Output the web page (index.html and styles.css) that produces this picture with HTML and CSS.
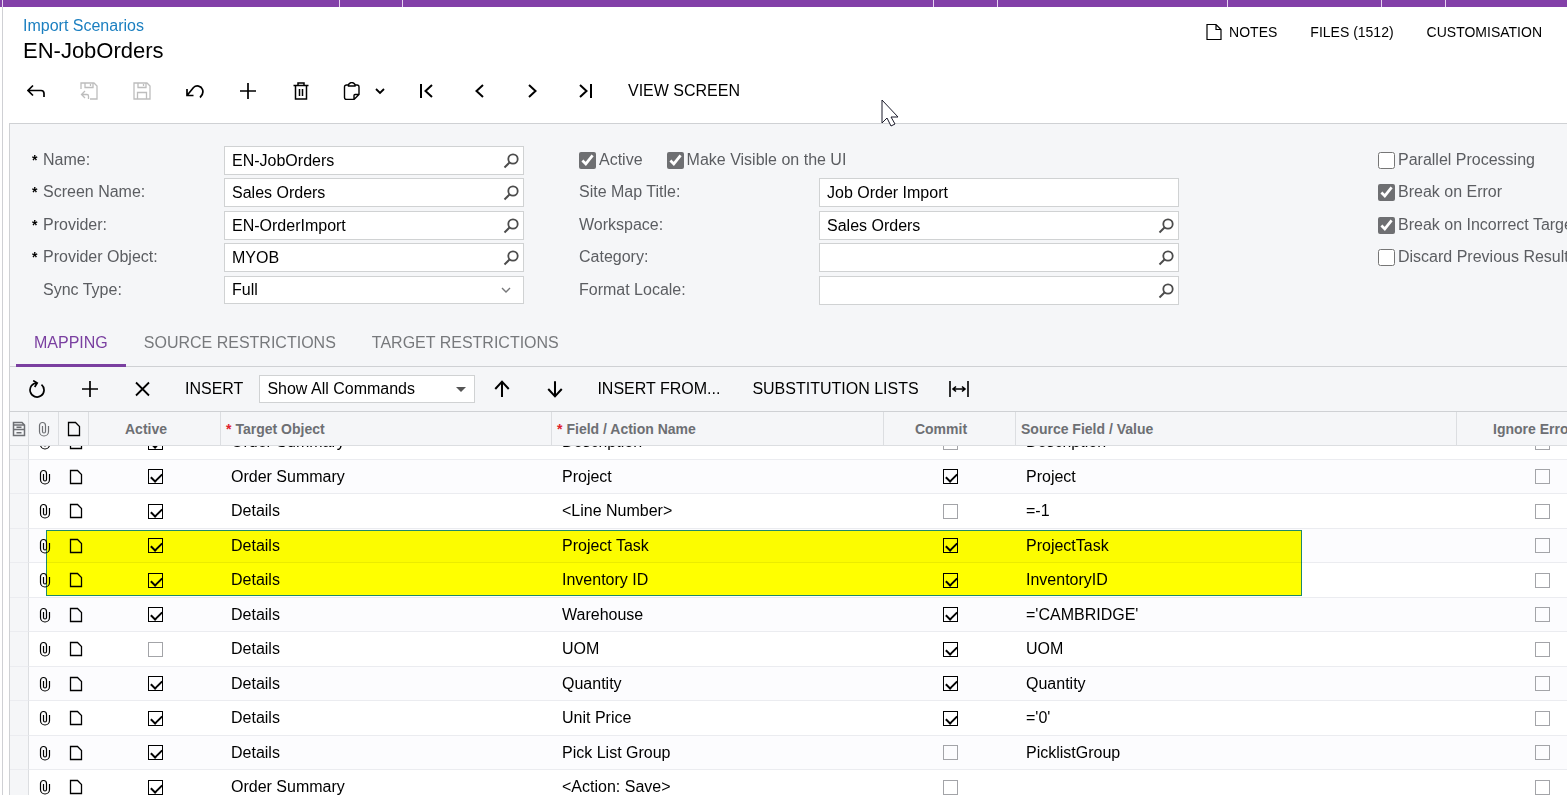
FILE: index.html
```html
<!DOCTYPE html>
<html lang="en">
<head>
    <meta charset="UTF-8">
    <meta name="viewport" content="width=device-width, initial-scale=1.0">
    <title>EN-JobOrders</title>
    <link rel="stylesheet" href="styles.css">
</head>
<body>
    <svg class="sprite" aria-hidden="true">
        <symbol id="i-plus" viewBox="0 0 18 18"><path d="M9 1v16M1 9h16" stroke-width="1.700"/></symbol>
        <symbol id="i-search" viewBox="0 0 16 16"><circle cx="10" cy="6" r="4.700" stroke-width="1.800"/><path d="M6.500 9.500L1.500 14.500" stroke-width="2"/></symbol>
        <symbol id="i-clip" viewBox="0 0 12 16"><path d="M10.500 5v5.500a4.500 4.500 0 0 1-9 0V4.500a3 3 0 0 1 6 0v6a1.500 1.500 0 0 1-3 0V5" stroke-width="1.200"/></symbol>
        <symbol id="i-doc" viewBox="0 0 14 16"><path d="M1.500 1.500h7l4 4v9h-11z" stroke-width="1.300"/></symbol>
        <symbol id="i-up" viewBox="0 0 16 16"><path d="M8 15V2M2 8l6-6.500L14 8" stroke-width="1.800"/></symbol>
    </svg>

    <div class="top-bar">
        <span></span><span></span><span></span><span></span><span></span><span></span><span></span><span></span><span></span>
    </div>

    <div class="page">
        <div class="page-header">
            <div class="titles">
                <a class="breadcrumb" href="#">Import Scenarios</a>
                <h1>EN-JobOrders</h1>
            </div>
            <div class="header-links">
                <button type="button"><svg class="icon note-icon" viewBox="0 0 16 18"><path d="M1 1.500h9l5 5v10H1zM10 1.500v5h5" stroke-width="1.200"/></svg>NOTES</button>
                <button type="button">FILES (1512)</button>
                <button type="button">CUSTOMISATION</button>
            </div>
        </div>

        <div class="toolbar">
            <button class="tool" type="button" aria-label="Back"><svg class="icon" viewBox="0 0 18 18"><path d="M6 3.500L1 8.500L6 13.500M1 8.500h13a3 3 0 0 1 3 3V15" stroke-width="1.700"/></svg></button>
            <button class="tool" type="button" aria-label="Save and close" disabled><svg class="icon" viewBox="0 0 18 18"><path d="M1 7V1h13l3 3v13h-7M5 1v4.500h8V1M10.500 2v2M5 9L1.500 12.500L5 16M1.500 12.500H7q1.500 0 1.500 1.500v3" stroke-width="1.300"/></svg></button>
            <button class="tool" type="button" aria-label="Save" disabled><svg class="icon" viewBox="0 0 18 18"><path d="M1 1h13l3 3v13H1zM5 1v4.500h8V1M10.500 2v2M4.500 17v-6.500h9V17" stroke-width="1.300"/></svg></button>
            <button class="tool" type="button" aria-label="Undo"><svg class="icon" viewBox="0 0 18 18"><path d="M1 7v6.500h6.500M1 13.500L7.500 5.500a5.500 5.500 0 0 1 9 2q1.500 4.500-2.500 8" stroke-width="1.700"/></svg></button>
            <button class="tool" type="button" aria-label="Add"><svg class="icon"><use href="#i-plus"/></svg></button>
            <button class="tool" type="button" aria-label="Delete"><svg class="icon" viewBox="0 0 18 18"><path d="M1.500 3.500h15M3.500 3.500V17h11V3.500M6 3V1h6v2M7.500 7v7M10.500 7v7" stroke-width="1.500"/></svg></button>
            <button class="tool tool-menu" type="button" aria-label="Clipboard">
                <svg class="icon" viewBox="0 0 18 18"><path d="M5.500 3H3.500a2 2 0 0 0-2 2v10.500a2 2 0 0 0 2 2H11l5-5V5a2 2 0 0 0-2-2h-2M5.500 4V2.500Q7 .5 8.800.5T12 2.500V4zM11 17v-3.500q0-1 1-1h4" stroke-width="1.400"/></svg>
                <svg class="caret" viewBox="0 0 10 8"><path d="M1 2l4 4l4-4" stroke-width="1.800"/></svg>
            </button>
            <button class="tool" type="button" aria-label="First record"><svg class="icon" viewBox="0 0 18 18"><path d="M3 2v14M14 3L7.500 9l6.500 6" stroke-width="2"/></svg></button>
            <button class="tool" type="button" aria-label="Previous record"><svg class="icon" viewBox="0 0 18 18"><path d="M12 3L5.500 9l6.500 6" stroke-width="2"/></svg></button>
            <button class="tool" type="button" aria-label="Next record"><svg class="icon" viewBox="0 0 18 18"><path d="M5 3l6.500 6L5 15" stroke-width="2"/></svg></button>
            <button class="tool" type="button" aria-label="Last record"><svg class="icon" viewBox="0 0 18 18"><path d="M3 3l6.500 6L3 15M14 2v14" stroke-width="2"/></svg></button>
            <button class="text-tool" type="button">VIEW SCREEN</button>
        </div>

        <div class="panel">
            <form class="summary">
                <div class="form-col form-col-main">
                    <label class="required" for="name">Name:</label>
                    <div class="field"><input id="name" type="text" value="EN-JobOrders"><button type="button" aria-label="Find name"><svg><use href="#i-search"/></svg></button></div>
                    <label class="required" for="screen">Screen Name:</label>
                    <div class="field"><input id="screen" type="text" value="Sales Orders"><button type="button" aria-label="Find screen"><svg><use href="#i-search"/></svg></button></div>
                    <label class="required" for="provider">Provider:</label>
                    <div class="field"><input id="provider" type="text" value="EN-OrderImport"><button type="button" aria-label="Find provider"><svg><use href="#i-search"/></svg></button></div>
                    <label class="required" for="object">Provider Object:</label>
                    <div class="field"><input id="object" type="text" value="MYOB"><button type="button" aria-label="Find provider object"><svg><use href="#i-search"/></svg></button></div>
                    <label for="sync">Sync Type:</label>
                    <div class="field select-field"><select id="sync"><option>Full</option></select><svg class="caret" viewBox="0 0 10 8"><path d="M1 2l4 4l4-4" stroke-width="1.400"/></svg></div>
                </div>

                <div class="form-col form-col-site">
                    <div class="checks">
                        <label><input type="checkbox" checked>Active</label>
                        <label><input type="checkbox" checked>Make Visible on the UI</label>
                    </div>
                    <label for="sitemap">Site Map Title:</label>
                    <div class="field"><input id="sitemap" type="text" value="Job Order Import"></div>
                    <label for="workspace">Workspace:</label>
                    <div class="field"><input id="workspace" type="text" value="Sales Orders"><button type="button" aria-label="Find workspace"><svg><use href="#i-search"/></svg></button></div>
                    <label for="category">Category:</label>
                    <div class="field"><input id="category" type="text"><button type="button" aria-label="Find category"><svg><use href="#i-search"/></svg></button></div>
                    <label for="locale">Format Locale:</label>
                    <div class="field"><input id="locale" type="text"><button type="button" aria-label="Find locale"><svg><use href="#i-search"/></svg></button></div>
                </div>

                <div class="form-col form-col-flags">
                    <label><input type="checkbox">Parallel Processing</label>
                    <label><input type="checkbox" checked>Break on Error</label>
                    <label><input type="checkbox" checked>Break on Incorrect Target</label>
                    <label><input type="checkbox">Discard Previous Result</label>
                </div>
            </form>

            <div class="tabs">
                <button class="tab active" type="button">MAPPING</button>
                <button class="tab" type="button">SOURCE RESTRICTIONS</button>
                <button class="tab" type="button">TARGET RESTRICTIONS</button>
            </div>

            <div class="grid-toolbar">
                <button class="tool" type="button" aria-label="Refresh"><svg class="icon" viewBox="0 0 18 18"><path d="M13.500 4.600A7 7 0 1 1 9 3M5.200.6L9.200 3L6.700 7" stroke-width="1.700"/></svg></button>
                <button class="tool" type="button" aria-label="Add row"><svg class="icon"><use href="#i-plus"/></svg></button>
                <button class="tool" type="button" aria-label="Delete row"><svg class="icon" viewBox="0 0 18 18"><path d="M2 2.500l13 13M15 2.500l-13 13" stroke-width="1.800"/></svg></button>
                <button class="text-tool" type="button">INSERT</button>
                <div class="field select-field commands"><select aria-label="Commands"><option>Show All Commands</option></select><svg class="arrow" viewBox="0 0 10 6"><path d="M0 1h10L5 6z"/></svg></div>
                <button class="tool" type="button" aria-label="Move up"><svg class="icon"><use href="#i-up"/></svg></button>
                <button class="tool" type="button" aria-label="Move down"><svg class="icon flip"><use href="#i-up"/></svg></button>
                <button class="text-tool" type="button">INSERT FROM...</button>
                <button class="text-tool" type="button">SUBSTITUTION LISTS</button>
                <button class="tool fit" type="button" aria-label="Fit columns"><svg class="fit-icon" viewBox="0 0 20 18"><path d="M1 1v16M19 1v16M4 9h12M7 6.500L4 9l3 2.500M13 6.500l3 2.500l-3 2.500" stroke-width="1.600"/></svg></button>
            </div>

            <div class="grid-wrap">
                <div class="grid-scroll" id="mappingGrid">
                    <table>
                        <colgroup>
                            <col class="c-handle"><col class="c-icon"><col class="c-icon"><col class="c-check"><col class="c-text"><col class="c-field"><col class="c-check"><col><col class="c-last">
                        </colgroup>
                        <thead>
                            <tr>
                                <th class="icon-cell"><svg class="rows-icon" viewBox="0 0 14 16"><path d="M1.500 14.500V1.500h8.500l2.500 2.500v10.500zM1.500 8.500h11M1.500 4h11M4.500 6.200h5M4.500 11.700h5" stroke-width="1.500"/></svg></th>
                                <th class="icon-cell"><svg class="clip"><use href="#i-clip"/></svg></th>
                                <th class="icon-cell dark"><svg class="doc"><use href="#i-doc"/></svg></th>
                                <th class="center">Active</th>
                                <th class="required">Target Object</th>
                                <th class="required">Field / Action Name</th>
                                <th class="center">Commit</th>
                                <th>Source Field / Value</th>
                                <th class="center">Ignore Error</th>
                            </tr>
                        </thead>
                        <tbody>
                            <tr>
                                <td></td><td><svg class="clip"><use href="#i-clip"/></svg></td><td><svg class="doc"><use href="#i-doc"/></svg></td>
                                <td class="center"><input type="checkbox" aria-label="Active" checked></td><td>Order Summary</td><td>Description</td>
                                <td class="center"><input type="checkbox" aria-label="Commit"></td><td>Description</td><td class="center"><input type="checkbox" aria-label="Ignore error"></td>
                            </tr>
                            <tr>
                                <td></td><td><svg class="clip"><use href="#i-clip"/></svg></td><td><svg class="doc"><use href="#i-doc"/></svg></td>
                                <td class="center"><input type="checkbox" aria-label="Active" checked></td><td>Order Summary</td><td>Project</td>
                                <td class="center"><input type="checkbox" aria-label="Commit" checked></td><td>Project</td><td class="center"><input type="checkbox" aria-label="Ignore error"></td>
                            </tr>
                            <tr>
                                <td></td><td><svg class="clip"><use href="#i-clip"/></svg></td><td><svg class="doc"><use href="#i-doc"/></svg></td>
                                <td class="center"><input type="checkbox" aria-label="Active" checked></td><td>Details</td><td>&lt;Line Number&gt;</td>
                                <td class="center"><input type="checkbox" aria-label="Commit"></td><td>=-1</td><td class="center"><input type="checkbox" aria-label="Ignore error"></td>
                            </tr>
                            <tr>
                                <td></td><td><svg class="clip"><use href="#i-clip"/></svg></td><td><svg class="doc"><use href="#i-doc"/></svg></td>
                                <td class="center"><input type="checkbox" aria-label="Active" checked></td><td>Details</td><td>Project Task</td>
                                <td class="center"><input type="checkbox" aria-label="Commit" checked></td><td>ProjectTask</td><td class="center"><input type="checkbox" aria-label="Ignore error"></td>
                            </tr>
                            <tr>
                                <td></td><td><svg class="clip"><use href="#i-clip"/></svg></td><td><svg class="doc"><use href="#i-doc"/></svg></td>
                                <td class="center"><input type="checkbox" aria-label="Active" checked></td><td>Details</td><td>Inventory ID</td>
                                <td class="center"><input type="checkbox" aria-label="Commit" checked></td><td>InventoryID</td><td class="center"><input type="checkbox" aria-label="Ignore error"></td>
                            </tr>
                            <tr>
                                <td></td><td><svg class="clip"><use href="#i-clip"/></svg></td><td><svg class="doc"><use href="#i-doc"/></svg></td>
                                <td class="center"><input type="checkbox" aria-label="Active" checked></td><td>Details</td><td>Warehouse</td>
                                <td class="center"><input type="checkbox" aria-label="Commit" checked></td><td>='CAMBRIDGE'</td><td class="center"><input type="checkbox" aria-label="Ignore error"></td>
                            </tr>
                            <tr>
                                <td></td><td><svg class="clip"><use href="#i-clip"/></svg></td><td><svg class="doc"><use href="#i-doc"/></svg></td>
                                <td class="center"><input type="checkbox" aria-label="Active"></td><td>Details</td><td>UOM</td>
                                <td class="center"><input type="checkbox" aria-label="Commit" checked></td><td>UOM</td><td class="center"><input type="checkbox" aria-label="Ignore error"></td>
                            </tr>
                            <tr>
                                <td></td><td><svg class="clip"><use href="#i-clip"/></svg></td><td><svg class="doc"><use href="#i-doc"/></svg></td>
                                <td class="center"><input type="checkbox" aria-label="Active" checked></td><td>Details</td><td>Quantity</td>
                                <td class="center"><input type="checkbox" aria-label="Commit" checked></td><td>Quantity</td><td class="center"><input type="checkbox" aria-label="Ignore error"></td>
                            </tr>
                            <tr>
                                <td></td><td><svg class="clip"><use href="#i-clip"/></svg></td><td><svg class="doc"><use href="#i-doc"/></svg></td>
                                <td class="center"><input type="checkbox" aria-label="Active" checked></td><td>Details</td><td>Unit Price</td>
                                <td class="center"><input type="checkbox" aria-label="Commit" checked></td><td>='0'</td><td class="center"><input type="checkbox" aria-label="Ignore error"></td>
                            </tr>
                            <tr>
                                <td></td><td><svg class="clip"><use href="#i-clip"/></svg></td><td><svg class="doc"><use href="#i-doc"/></svg></td>
                                <td class="center"><input type="checkbox" aria-label="Active" checked></td><td>Details</td><td>Pick List Group</td>
                                <td class="center"><input type="checkbox" aria-label="Commit"></td><td>PicklistGroup</td><td class="center"><input type="checkbox" aria-label="Ignore error"></td>
                            </tr>
                            <tr>
                                <td></td><td><svg class="clip"><use href="#i-clip"/></svg></td><td><svg class="doc"><use href="#i-doc"/></svg></td>
                                <td class="center"><input type="checkbox" aria-label="Active" checked></td><td>Order Summary</td><td>&lt;Action: Save&gt;</td>
                                <td class="center"><input type="checkbox" aria-label="Commit"></td><td></td><td class="center"><input type="checkbox" aria-label="Ignore error"></td>
                            </tr>
                        </tbody>
                    </table>
                </div>
                <div class="highlight"></div>
            </div>
        </div>
    </div>

    <svg class="cursor" viewBox="0 0 19 28" aria-hidden="true"><path d="M1 1v23l5-5l4 8l4-2l-4-7h7z"/></svg>

    <script>
        // start a little way down the mapping list
        document.getElementById('mappingGrid').scrollTop = 21;
    </script>
</body>
</html>
```
FILE: styles.css
```css
* {
    margin: 0;
    padding: 0;
    box-sizing: border-box;
}

body {
    height: 100vh;
    overflow: hidden;
    display: flex;
    flex-direction: column;
    background: #ffffff;
    color: #000000;
    font-family: "Liberation Sans", Arial, sans-serif;
    font-size: 16px;
    line-height: 20px;
    white-space: nowrap;
}

button, input, select {
    font: inherit;
    color: inherit;
    background: none;
    border: none;
}

button {
    cursor: pointer;
}

svg {
    fill: none;
    stroke: currentColor;
    display: block;
    flex: none;
}

.sprite {
    position: absolute;
    width: 0;
    height: 0;
}

.top-bar {
    display: grid;
    grid-template-columns: 3px 337px 63px 531px 64px 230px 154px 64px 1fr;
    height: 7px;
    flex: none;
    background: #8340a8;
}

.top-bar span {
    border-right: 1px solid #e6d3ef;
}

.top-bar span:last-child {
    border-right: none;
}

.page {
    flex: 1;
    min-height: 0;
    display: flex;
    flex-direction: column;
    margin-left: 2px;
    padding-left: 6px;
    border-left: 1px solid #cfd0d4;
}

.page-header {
    display: flex;
    justify-content: space-between;
    padding: 9px 25px 0 14px;
}

.breadcrumb {
    display: block;
    color: #1b7fc0;
    text-decoration: none;
}

h1 {
    font-size: 22px;
    font-weight: normal;
    line-height: 30px;
}

.header-links {
    display: flex;
    align-items: flex-start;
    gap: 33px;
    padding-top: 6px;
    font-size: 14px;
}

.header-links button {
    display: flex;
    align-items: center;
    gap: 6px;
}

.note-icon {
    width: 16px;
    height: 18px;
}

.toolbar,
.grid-toolbar {
    display: flex;
    align-items: center;
    height: 44px;
    flex: none;
}

.toolbar {
    padding-top: 5px;
    margin-bottom: 13px;
}

.tool {
    width: 53px;
    height: 30px;
    display: flex;
    align-items: center;
    justify-content: center;
}

.tool:disabled {
    color: #bdbdbd;
}

.tool-menu {
    width: 73px;
    gap: 14px;
}

.icon {
    width: 18px;
    height: 18px;
}

.caret {
    width: 10px;
    height: 8px;
}

.fit {
    width: 48px;
}

.fit-icon {
    width: 20px;
    height: 18px;
}

.flip {
    transform: rotate(180deg);
}

.text-tool {
    padding: 0 16px;
}

.panel {
    flex: 1;
    min-height: 0;
    display: flex;
    flex-direction: column;
    background: #f5f6f8;
    border: 1px solid #cfd1d4;
    border-width: 1px 0 0 1px;
}

.summary {
    display: grid;
    grid-template-columns: 492fr 600fr 333fr;
    column-gap: 55px;
    padding: 22px 0 13px 22px;
    color: #5b5d61;
}

.form-col {
    display: grid;
    grid-auto-rows: 32px 33px;
    align-items: start;
    min-width: 0;
}

.form-col-main {
    grid-template-columns: 192px 1fr;
}

.form-col-site {
    grid-template-columns: 240px 1fr;
}

.form-col-flags {
    padding-left: 144px;
}

.summary label {
    line-height: 27px;
}

.form-col-main label {
    padding-left: 11px;
}

.form-col-main .required {
    padding-left: 0;
}

.form-col-main .required::before {
    content: "*";
    display: inline-block;
    width: 11px;
    color: #000000;
    font-size: 14px;
    font-weight: bold;
    line-height: 20px;
}

.checks {
    grid-column: 1 / -1;
    display: flex;
    gap: 24px;
}

.checks label,
.form-col-flags label {
    display: flex;
    align-items: center;
    gap: 3px;
}

.summary input[type="checkbox"] {
    width: 17px;
    height: 17px;
    margin-top: 1px;
    accent-color: #6e6f72;
}

.field {
    display: flex;
    align-items: center;
    height: 29px;
    background: #ffffff;
    border: 1px solid #d0d2d3;
    color: #000000;
}

.field input {
    flex: 1;
    min-width: 0;
    padding: 0 7px;
    outline: none;
}

.field button {
    padding: 0 4px;
    color: #4c4c4c;
}

.field button svg {
    width: 16px;
    height: 16px;
}

.select-field {
    position: relative;
    height: 28px;
}

.select-field select {
    flex: 1;
    height: 26px;
    padding: 0 7px;
    appearance: none;
    outline: none;
}

.select-field svg {
    position: absolute;
    right: 12px;
    pointer-events: none;
    color: #77787a;
}

.tabs {
    display: flex;
    height: 46px;
    flex: none;
    padding-left: 6px;
    border-bottom: 1px solid #cfd1d4;
}

.tab {
    height: 46px;
    padding: 0 18px;
    color: #77797c;
    border-bottom: 3px solid transparent;
}

.tab.active {
    color: #7a3fa0;
    border-bottom-color: #7a3fa0;
}

.commands {
    width: 216px;
}

.commands .arrow {
    right: 8px;
    width: 10px;
    height: 6px;
    fill: #555555;
    stroke: none;
}

.grid-wrap {
    position: relative;
    flex: 1;
    min-height: 0;
    border-top: 1px solid #cfd1d4;
}

.grid-scroll {
    height: 100%;
    overflow: hidden;
    background: #ffffff;
}

table {
    width: calc(100% + 61px);
    table-layout: fixed;
    border-spacing: 0;
}

.c-handle { width: 19px; }
.c-icon { width: 30px; }
.c-check { width: 132px; }
.c-text { width: 331px; }
.c-field { width: 332px; }
.c-last { width: 171px; }

th {
    position: sticky;
    top: 0;
    z-index: 1;
    height: 34px;
    padding: 0 5px;
    background: #f5f6f8;
    border-right: 1px solid #dcdee1;
    border-bottom: 1px solid #dcdee1;
    color: #6d6f73;
    font-size: 14px;
    text-align: left;
}

th.center {
    padding-right: 22px;
    text-align: center;
}

th.required::before {
    content: "*";
    margin-right: 4px;
    color: #e0202c;
}

th.icon-cell {
    padding: 0;
}

th svg {
    margin: 0 auto;
}

th.dark {
    color: #000000;
}

.rows-icon {
    width: 14px;
    height: 16px;
}

.clip {
    width: 12px;
    height: 16px;
}

.doc {
    width: 14px;
    height: 16px;
}

td {
    height: 34px;
    padding: 0 10px;
    border-bottom: 1px solid #ebecf0;
}

tr:nth-child(odd) td {
    height: 35px;
}

tbody tr:nth-child(even) {
    background: #fcfcfe;
}

td:first-child {
    padding: 0;
    background: #f5f6f8;
    border-right: 1px solid #dcdee1;
}

td.center {
    padding: 0;
    text-align: center;
}

td input[type="checkbox"] {
    appearance: none;
    display: block;
    position: relative;
    width: 15px;
    height: 15px;
    margin: 0 auto;
    border: 1px solid #a3a4a8;
}

td input[type="checkbox"]:checked {
    border-color: #000000;
}

td input[type="checkbox"]:checked::after {
    content: "";
    position: absolute;
    left: 2px;
    top: 3px;
    width: 9px;
    height: 5px;
    border: solid #000000;
    border-width: 0 0 2px 2px;
    transform: rotate(-45deg);
}

/* marks the two project rows */
.highlight {
    position: absolute;
    top: 118px;
    left: 36px;
    width: 1256px;
    height: 66px;
    background: #ffff00;
    border: 1px solid #1f8a6a;
    mix-blend-mode: multiply;
    pointer-events: none;
}

.cursor {
    position: absolute;
    top: 99px;
    left: 881px;
    width: 19px;
    height: 28px;
    fill: #ffffff;
    stroke: #1a1a2a;
}
```
